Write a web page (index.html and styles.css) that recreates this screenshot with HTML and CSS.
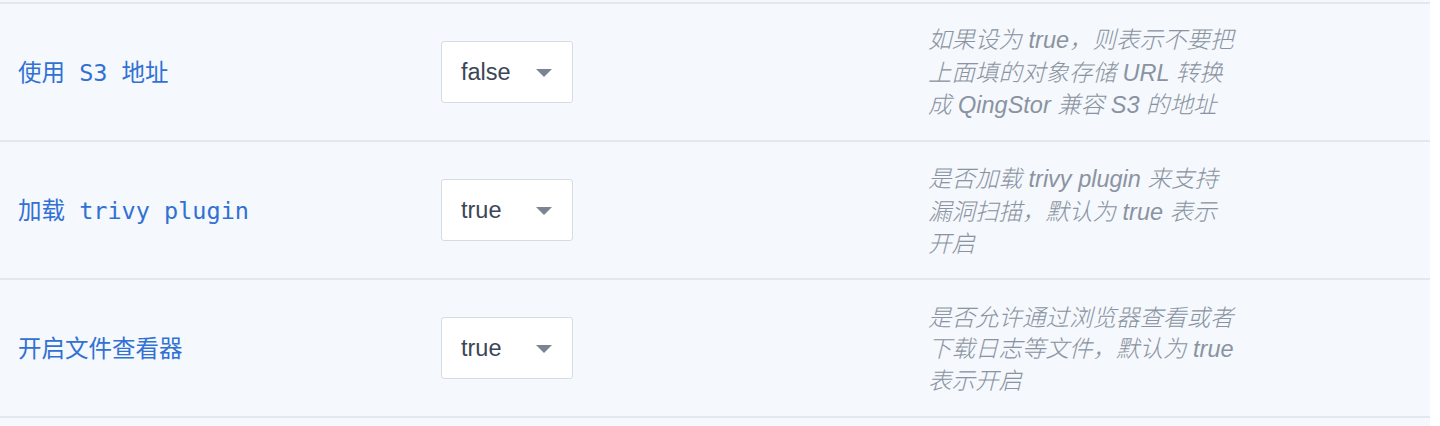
FILE: index.html
```html
<!DOCTYPE html>
<html lang="zh-CN">
<head>
<meta charset="utf-8">
<title>配置</title>
<link rel="stylesheet" href="styles.css">
</head>
<body>
<div class="settings">
  <div class="row">
    <div class="label">使用 S3 地址</div>
    <div class="field"><div class="select"><span class="value">false</span><span class="caret"></span></div></div>
    <div class="desc">如果设为<span class="en" lang="en"> true</span>，则表示不要把上面填的对象存储<span class="en" lang="en"> URL </span>转换成<span class="en" lang="en"> QingStor </span>兼容<span class="en" lang="en"> S3 </span>的地址</div>
  </div>
  <div class="row">
    <div class="label">加载 trivy plugin</div>
    <div class="field"><div class="select"><span class="value">true</span><span class="caret"></span></div></div>
    <div class="desc">是否加载<span class="en" lang="en"> trivy plugin </span>来支持漏洞扫描，默认为<span class="en" lang="en"> true </span>表示开启</div>
  </div>
  <div class="row">
    <div class="label">开启文件查看器</div>
    <div class="field"><div class="select"><span class="value">true</span><span class="caret"></span></div></div>
    <div class="desc">是否允许通过浏览器查看或者下载日志等文件，默认为<span class="en" lang="en"> true </span>表示开启</div>
  </div>
</div>
</body>
</html>
```
FILE: styles.css
```css
html, body {
  margin: 0;
  padding: 0;
  background: #ffffff;
}
body {
  height: 426px;
  overflow: hidden;
}
.settings {
  width: 1430px;
  height: 426px;
  background: #f5f8fc;
  padding-top: 2px;
  box-sizing: border-box;
}
.row {
  display: grid;
  grid-template-columns: 423px 487px 1fr;
  align-items: center;
  height: 138px;
  box-sizing: border-box;
  border-top: 2px solid #e3e8ee;
  padding-left: 18px;
}
.row:last-child {
  border-bottom: 2px solid #e3e8ee;
  height: 140px;
}
.label {
  font-family: "DejaVu Sans Mono", "Noto Sans CJK SC", monospace;
  font-size: 23.5px;
  color: #3171d4;
  white-space: pre;
  margin-top: -2px;
}
.select {
  width: 132px;
  height: 62px;
  box-sizing: border-box;
  border: 1.5px solid #d6dce4;
  border-radius: 3px;
  background: #ffffff;
  display: flex;
  align-items: center;
  padding-left: 19px;
  padding-right: 20px;
  justify-content: space-between;
}
.value {
  font-family: "Liberation Sans", Arial, sans-serif;
  font-size: 23.5px;
  color: #3b4656;
}
.caret {
  width: 0;
  height: 0;
  border-left: 8px solid transparent;
  border-right: 8px solid transparent;
  border-top: 8px solid #7b8493;
  margin-top: 2px;
}
.desc {
  width: 310px;
  font-family: "Noto Sans CJK SC", sans-serif;
  font-size: 23.5px;
  font-weight: 300;
  line-height: 30.5px;
  color: #8a93a1;
  font-style: italic;
  font-synthesis: style;
}
.en {
  font-family: "Liberation Sans", Arial, sans-serif;
  font-weight: 400;
}
```
